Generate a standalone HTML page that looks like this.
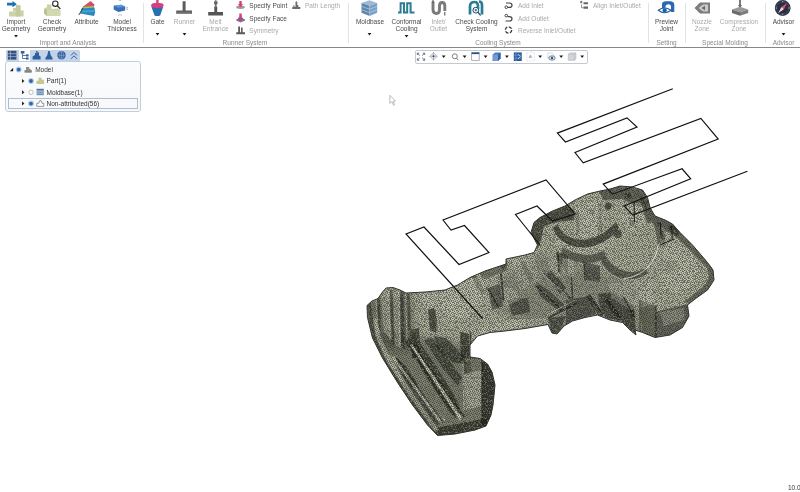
<!DOCTYPE html>
<html><head><meta charset="utf-8">
<style>
html,body{margin:0;padding:0;background:#fff;}
body{width:800px;height:492px;position:relative;overflow:hidden;font-family:"Liberation Sans",sans-serif;font-size:6.5px;color:#555;}
#ribbon{position:absolute;left:0;top:0;width:800px;height:46.800px;background:#fff;border-bottom:1.400px solid #888;}
.lb{position:absolute;transform:translateX(-50%);text-align:center;white-space:nowrap;line-height:7.3px;color:#4a4a4a;}
.lb.g{color:#a9a9a9;}
.gl{position:absolute;transform:translateX(-50%);white-space:nowrap;top:38.5px;line-height:7.3px;color:#8a8a8a;}
.sm{position:absolute;white-space:nowrap;line-height:7.3px;color:#4a4a4a;}
.sm.g{color:#a9a9a9;}
.sep{position:absolute;top:3px;height:40px;width:1px;background:#e3e3e3;}
.ar{position:absolute;width:0;height:0;border-left:1.900px solid transparent;border-right:1.900px solid transparent;border-top:2.500px solid #1a1a1a;transform:translateX(-50%);}
svg{position:absolute;overflow:visible;}

#vtb{position:absolute;left:415px;top:50.300px;width:170.500px;height:11.500px;border:.8px solid #c6c9ce;border-radius:2px;background:#fff;}
#tabs{position:absolute;left:5.600px;top:49.600px;width:74.500px;height:11.200px;background:#c3d3ea;border-radius:1.500px 1.500px 0 0;}
#tabsel{position:absolute;left:13.800px;top:.6px;width:10.800px;height:10.600px;background:#fff;}
#tree{position:absolute;left:5.200px;top:60.800px;width:133.400px;height:49.600px;border:1.200px solid #c3cedd;border-radius:3px;background:linear-gradient(#fbfcfd,#f6f8fa);}
#selrow{position:absolute;left:1.500px;top:36.300px;width:128.600px;height:8.800px;border:.8px solid #b3bccb;background:#f7f9fc;}
.tt{position:absolute;white-space:nowrap;line-height:7.300px;color:#333;font-size:6.500px;}
#ver{position:absolute;left:788px;top:484px;line-height:7.300px;color:#333;white-space:nowrap;}
.lb,.gl,.sm,.tt,#ver{filter:grayscale(1);}
</style></head><body>
<div id="ribbon">
<!-- Import and Analysis -->
<div class="lb" style="left:16px;top:17.6px">Import<br>Geometry</div><div class="lb" style="left:52px;top:17.6px">Check<br>Geometry</div>
<div class="lb" style="left:86.5px;top:17.6px">Attribute</div>
<div class="lb" style="left:122px;top:17.6px">Model<br>Thickness</div>
<div class="gl" style="left:68px">Import and Analysis</div>
<div class="sep" style="left:143px"></div>
<!-- Runner System -->
<div class="lb" style="left:157.5px;top:17.6px">Gate</div><div class="lb g" style="left:184.5px;top:17.6px">Runner</div><div class="lb g" style="left:215.5px;top:17.6px">Melt<br>Entrance</div>
<div class="sm" style="left:249.3px;top:1.7px">Specify Point</div>
<div class="sm" style="left:249.3px;top:14.6px">Specify Face</div>
<div class="sm g" style="left:249.3px;top:27px">Symmetry</div>
<div class="sm g" style="left:305px;top:1.7px">Path Length</div>
<div class="gl" style="left:245px">Runner System</div>
<div class="sep" style="left:348px"></div>
<!-- Cooling System -->
<div class="lb" style="left:370px;top:17.6px">Moldbase</div><div class="lb" style="left:406.5px;top:17.6px">Conformal<br>Cooling</div><div class="lb g" style="left:438.5px;top:17.6px">Inlet/<br>Outlet</div>
<div class="lb" style="left:476.5px;top:17.6px">Check Cooling<br>System</div>
<div class="sm g" style="left:518px;top:1.7px">Add Inlet</div>
<div class="sm g" style="left:518px;top:14.6px">Add Outlet</div>
<div class="sm g" style="left:518px;top:27px">Reverse Inlet/Outlet</div>
<div class="sm g" style="left:593px;top:1.7px">Align Inlet/Outlet</div>
<div class="gl" style="left:498px">Cooling System</div>
<div class="sep" style="left:648px"></div>
<!-- Setting -->
<div class="lb" style="left:666.5px;top:17.6px">Preview<br>Joint</div>
<div class="gl" style="left:666.5px">Setting</div>
<div class="sep" style="left:685px"></div>
<!-- Special Molding -->
<div class="lb g" style="left:702px;top:17.6px">Nozzle<br>Zone</div>
<div class="lb g" style="left:739px;top:17.6px">Compression<br>Zone</div>
<div class="gl" style="left:725px">Special Molding</div>
<div class="sep" style="left:765px"></div>
<!-- Advisor -->
<div class="lb" style="left:783.5px;top:17.6px">Advisor</div><div class="gl" style="left:783.5px">Advisor</div>

<svg id="icons" width="800" height="46" viewBox="0 0 800 46" style="left:0;top:0">
<defs><filter id="ib" x="-10%" y="-10%" width="120%" height="120%"><feGaussianBlur stdDeviation="0.35"/></filter></defs>
<g filter="url(#ib)">
<!-- Import Geometry -->
<path d="M9,16.500V11.500H13V8H15.800V5.300H20.400V10.500H23.600V16.500Z" fill="#cdd2a6"/>
<path d="M15.800,5.300H20.400V16.500H15.800Z" fill="#c3c99a"/>
<path d="M13,11.500h2.800M20.400,10.500h3.200" stroke="#e4e8c8" stroke-width=".7"/>
<path d="M7,2.800H12.500V1L16.800,4.200L12.500,7.200V5.400H7Z" fill="#1c6fb0"/>
<!-- Check Geometry -->
<path d="M44.200,13.500V8.500L47,7V4.600H51.500V9L58,8.500L60.300,10.500V16H47Z" fill="#cdd2a6"/>
<path d="M44.200,8.500L47,10.500V16L44.200,13.500Z" fill="#b9bf90"/>
<path d="M47,10.500H60.300V16H47Z" fill="#d3d8ae"/>
<circle cx="55.300" cy="3.700" r="2.700" fill="#fff" fill-opacity=".7" stroke="#2a2a2a" stroke-width="1.100"/>
<path d="M57.300,5.800L60,8.600" stroke="#2a2a2a" stroke-width="1.300" stroke-linecap="round"/>
<!-- Attribute -->
<path d="M82.500,7L90.500,1L94.500,4.500L93.500,8Z" fill="#d4506a"/>
<path d="M82.500,7L93.500,6L94,8.500L82,9.500Z" fill="#9ccf5a"/>
<path d="M81.500,8.500L94.500,7.500L95.200,12.500L94,16L80,13.500Z" fill="#2f86c2"/>
<path d="M82,10.500L94.800,10L94.500,12L81,12.500Z" fill="#3aa8c8"/>
<path d="M78.800,15L83.300,7.600" stroke="#333" stroke-width=".9"/>
<!-- Model Thickness -->
<path d="M113.700,5.800L121,4.800L125.200,6.500V10.500L118.500,11.900L113.700,9.500Z" fill="#2e72b8"/>
<path d="M113.700,5.800L121,4.800L125.200,6.500L118.500,7.800Z" fill="#5a9ad6"/>
<path d="M115,7.500h9M115,9h9" stroke="#c05a8a" stroke-width=".5" stroke-dasharray=".8 1.200"/>
<path d="M118,15.600L120,14.400L122,15.600" stroke="#999" stroke-width=".6" fill="none"/>
<path d="M118.500,0L120,.8L121.500,0" stroke="#999" stroke-width=".6" fill="none"/>
<text x="126.200" y="10.300" font-family="Liberation Sans, sans-serif" font-size="6" fill="#8a8a8a">t</text>
<!-- Gate -->
<path d="M151.300,6.500L163.300,6.500L160.200,15.500Q157.300,16.600 154.500,15.500Z" fill="#2c6fae"/>
<path d="M150.800,5.200Q152,2.500 156.200,3V0H158.600V3Q163,2.600 163.800,5.200Q163,7.800 157.300,8Q151.500,7.800 150.800,5.200Z" fill="#d8407c"/>
<!-- Runner -->
<path d="M182.600,1.300H185.600V10.600H192V13.700H176.200V10.600H182.600Z" fill="#5c5c5c"/>
<path d="M176.200,12.300H192" stroke="#888" stroke-width=".6"/>
<!-- Melt Entrance -->
<path d="M214.300,6.500H217.200V11.900H223V15.600H208.200V11.900H214.300Z" fill="#555"/>
<path d="M214,1.200H217.500V4.200H216.600V6.500H214.900V4.200H214Z" fill="#666"/>
<path d="M215,0h1.500v1.200h-1.500z" fill="#888"/>
<!-- Specify Point -->
<ellipse cx="240.500" cy="7.300" rx="4.300" ry="1.700" fill="#9a9a9a"/>
<path d="M239.300,1H241.700V4.300H243.200L240.500,7.200L237.800,4.300H239.300Z" fill="#d83a7a"/>
<!-- Specify Face -->
<path d="M236.300,19.500L240.500,17.500L245,19.500L240.500,21.700Z" fill="#2f7fc0"/>
<path d="M236.300,19.500L240.500,21.700L245,19.500V20.600L240.500,22.600L236.300,20.600Z" fill="#c03a3a"/>
<path d="M239.300,13.500H241.700V16.500L243.300,19.300H237.700L239.300,16.500Z" fill="#d83a7a"/>
<!-- Symmetry -->
<path d="M238.200,26.500H240V32.300H241V27.500H242.600V32.300H245V34.300H236.300V32.300H238.200Z" fill="#5a5a5a"/>
<!-- Path Length -->
<path d="M295.500,2H297.300V5H298.300V7H300.300V9H292.300V7H293.300V5.500H294.600V7H295.500Z" fill="#6a6a6a"/>
<path d="M295.800,1.200h1.200v1h-1.200z" fill="#c86a8a"/>
<!-- Moldbase -->
<path d="M361.500,3L369.500,.3L377.200,3L369.500,5.800Z" fill="#9db9d6"/>
<path d="M361.500,3L369.500,5.800V16L361.500,12.800Z" fill="#5f86ad"/>
<path d="M369.500,5.800L377.200,3V12.800L369.500,16Z" fill="#7aa0c6"/>
<path d="M361.500,6.300L369.500,9.200L377.200,6.300M361.500,9.600L369.500,12.600L377.200,9.600" stroke="#b9d0e6" stroke-width=".7" fill="none"/>
<!-- Conformal Cooling -->
<path d="M398,12.500H400.600V3.200H404V12.500H407.200V3.200H410.600V12.500H414.500" stroke="#2a7d92" stroke-width="2" fill="none" stroke-linejoin="miter"/>
<!-- Inlet/Outlet -->
<path d="M433,1.500V9.500Q433,13.500 436.500,13.500Q439.500,13.500 439.500,9.500V6Q439.500,2.500 442.200,2.500Q444.800,2.500 444.800,6V11" stroke="#7a7a7a" stroke-width="2.900" fill="none" stroke-linecap="butt"/>
<path d="M433,0V3M444.800,12V15.500" stroke="#444" stroke-width="1"/>
<!-- Check Cooling -->
<path d="M470,14.500V6.500Q470,2 474.500,2Q478,2 478,6.500V9M482,14.500V5Q482,1.500 479,1.500" stroke="#2a7d92" stroke-width="2.700" fill="none"/>
<circle cx="475.800" cy="10.200" r="2.900" fill="#eaf3f6" stroke="#1f4f6a" stroke-width="1"/>
<circle cx="475.800" cy="10.200" r="1.100" fill="#2a7d92"/>
<path d="M478,12.400L480.300,15" stroke="#1f4f6a" stroke-width="1.200" stroke-linecap="round"/>
<!-- Add Inlet -->
<path d="M506,3H509.500Q512,3 512,5.200Q512,7.400 509.500,7.400H508" stroke="#444" stroke-width="1.200" fill="none"/>
<circle cx="506.300" cy="7.200" r="1.300" fill="#fff" stroke="#444" stroke-width="1"/>
<!-- Add Outlet -->
<path d="M507.500,16.600H509.500Q512,16.600 512,18.800Q512,21 509.500,21H505.500" stroke="#444" stroke-width="1.200" fill="none"/>
<circle cx="506.300" cy="15.600" r="1.300" fill="#fff" stroke="#444" stroke-width="1"/>
<!-- Reverse -->
<circle cx="508.500" cy="30" r="3.200" fill="none" stroke="#3a3a3a" stroke-width="1.300" stroke-dasharray="3.400 1.600"/>
<!-- Align -->
<path d="M580,2h2.500M581.200,.8v2.500" stroke="#444" stroke-width=".8"/>
<path d="M583.500,2.200h4.500v2h-4.500zM583.500,6.500h4.500v2.300h-4.500z" fill="#666"/>
<path d="M581.500,4.500v3.200h2" stroke="#666" stroke-width=".7" fill="none"/>
<!-- Preview Joint -->
<path d="M662,9V4.500Q662,1.300 666,1.300H670Q674.300,1.300 674.300,5V12H671V6.500Q671,4.300 668.500,4.300Q665.500,4.300 665.500,7Z" fill="#2a68b0"/>
<path d="M658.300,10.300Q664.500,5.500 671,10.300Q664.500,15.300 658.300,10.300Z" fill="#fff" stroke="#1f5fa8" stroke-width="1.100"/>
<circle cx="664.700" cy="10.300" r="2.100" fill="#1f5fa8"/>
<!-- Nozzle Zone -->
<path d="M694.500,8L700,2.500H710V13.500H700Z" fill="#7c7c7c"/>
<path d="M698.500,8L703,4.500H708V11.500H703Z" fill="#c9c9c9"/>
<path d="M701.500,8L705,5.800V10.200Z" fill="#666"/>
<!-- Compression Zone -->
<path d="M739,0H741V6.500H739Z" fill="#777"/>
<path d="M738,5H742L740,8Z" fill="#666"/>
<path d="M732,9.500L740,6.800L748.200,9.500L740,12.300Z" fill="#9a9a9a"/>
<path d="M732,9.500L740,12.300V15.800L732,13Z" fill="#6a6a6a"/>
<path d="M740,12.300L748.200,9.500V13L740,15.800Z" fill="#7d7d7d"/>
<!-- Advisor -->
<circle cx="782.700" cy="8" r="7.900" fill="#2b2d40"/>
<circle cx="782.700" cy="8" r="6.300" fill="none" stroke="#5a5f7a" stroke-width=".6"/>
<path d="M787.300,2.800L783.800,9.200L781.500,7Z" fill="#e8506a"/>
<path d="M778.300,13L783.800,9.200L781.500,7Z" fill="#dfe3ee"/>
<path d="M782.700,.8v1.600M782.700,13.600v1.600M775.500,8h1.600M788.300,8h1.600" stroke="#c8ccd8" stroke-width=".7"/>
</g>
</svg>
</div>

<svg id="scene" width="800" height="445" viewBox="0 47 800 445" style="left:0;top:47px">
<defs>
<pattern id="mesh" width="8.0" height="8.0" patternUnits="userSpaceOnUse">
<path d="M0.00 0.00h.01M0.00 8.00h.01M8.00 0.00h.01M8.00 8.00h.01M0.00 4.00h.01M8.00 4.00h.01M0.80 2.40h.01M8.80 2.40h.01M0.80 6.40h.01M8.80 6.40h.01M1.60 0.80h.01M1.60 8.80h.01M1.60 4.80h.01M2.40 3.20h.01M2.40 -0.80h.01M2.40 7.20h.01M3.20 1.60h.01M3.20 5.60h.01M4.00 0.00h.01M4.00 8.00h.01M4.00 4.00h.01M4.80 2.40h.01M4.80 6.40h.01M5.60 0.80h.01M5.60 8.80h.01M5.60 4.80h.01M6.40 3.20h.01M6.40 -0.80h.01M6.40 7.20h.01M-0.80 1.60h.01M7.20 1.60h.01M-0.80 5.60h.01M7.20 5.60h.01" stroke="#14150f" stroke-width="1.25" stroke-linecap="round" fill="none"/>
</pattern>
<filter id="noise" x="0" y="0" width="100%" height="100%"><feTurbulence type="fractalNoise" baseFrequency="0.62" numOctaves="2" seed="7" result="t"/><feColorMatrix in="t" type="matrix" values="0 0 0 0 0.14  0 0 0 0 0.145  0 0 0 0 0.12  -7 0 0 0 3.3"/></filter>
<filter id="b0" x="-30%" y="-30%" width="160%" height="160%"><feGaussianBlur stdDeviation="0.3"/></filter>
<filter id="b1" x="-30%" y="-30%" width="160%" height="160%"><feGaussianBlur stdDeviation="0.55"/></filter>
<filter id="b2" x="-30%" y="-30%" width="160%" height="160%"><feGaussianBlur stdDeviation="2"/></filter>
<filter id="b4" x="-30%" y="-30%" width="160%" height="160%"><feGaussianBlur stdDeviation="3.5"/></filter>
<clipPath id="mclip"><use href="#mpoly"/></clipPath>
</defs>
<!-- cooling lines behind/over -->
<g id="model">
<polygon id="mpoly" fill="#cdd0b9" points="367,305.5 372,301 378,298.5 382.5,292 386,288 393,287.5 400,290 406,293 425,292 445,290 457.5,285 470,277.5 485,271 500,266 506,264 506,259 525,255 534,252.5 537.5,245 531,232.5 534,222.5 540,217.5 552.5,211 565,206 575,200 587.5,194 600,191 610,189 620,186 632.5,187 642.5,190 647.5,197.5 650,207.5 655,216 665,220 672.5,224 680,232.5 692.5,245 707.5,262.5 713,270 714,280 707.5,290 695,299 687.5,305 689,316 682.5,327.5 670,335 655,337.5 642.5,332.5 635,330 636,335 630,330 622.5,322.5 610,320 597.5,315 585,317.5 572.5,321 564,326 557,334 552,333 548,324.5 525,328.5 505,331 490,332.5 477.5,336 470,345 470,357 480,358.5 487.5,364 492,372 495,385 493,405 491,415 486,426 475,430 455,434 437.5,435.5 427.5,425 412.5,405 397.5,382.5 382.5,358 372.5,338 367.5,317.5"/>
<g clip-path="url(#mclip)">
<g id="soft" filter="url(#b4)" fill="#26271f">
<!-- lower handle overall darker -->
<polygon opacity=".36" points="372,330 470,345 500,370 495,430 437,440 395,385"/>
<polygon opacity=".22" points="540,255 640,285 640,340 545,335 500,310 500,280"/>
<polygon opacity=".4" points="366,300 410,292 416,350 380,350"/>
</g>
<g id="shade" filter="url(#b1)" fill="#22231c">
<!-- handle: wall stripes -->
<polygon opacity=".5" points="377,297 380,296 381,330 378,328"/>
<polygon opacity=".5" points="390,290 392.500,290 394,345 391,343"/>
<polygon opacity=".55" points="400,291 403.500,292 405,350 401,346"/>
<polygon opacity=".5" points="407,294 409.500,294 411,330 408,330"/>
<polygon opacity=".62" points="367,306 371,303 375,336 385,357 400,381 429,423 438,433 432,436 412,408 396,384 381,358 371,338"/>
<!-- handle dark blobs -->
<polygon opacity=".7" points="428,310 434,308 437,320 436,333 430,330"/>
<polygon opacity=".65" points="410,330 419,328 421,360 412,358"/>
<polygon opacity=".6" points="434,336 446,338 464,356 466,364 452,362 438,350"/>
<polygon opacity=".7" points="460,332 469,334 469,358 461,360"/>
<polygon opacity=".6" points="397,358 406,366 418,384 412,388 398,368"/>
<polygon opacity=".65" points="412,345 420,343 436,366 456,398 462,414 454,418 440,396 420,366"/>
<polygon opacity=".6" points="424,340 432,338 452,364 462,378 458,386 444,370"/>
<polygon opacity=".55" points="400,372 410,380 440,424 432,428 408,396"/>
<polygon opacity=".75" points="482,361 497,368 497,420 488,430 482,424"/>
<polygon opacity=".7" points="436,428 488,418 492,432 437,440"/>
<polygon opacity=".45" points="463,362 470,360 472,374 464,374"/>

<!-- extra ribs -->
<polygon opacity=".55" points="404,340 409,338 430,370 458,412 452,415 428,380"/>
<polygon opacity=".5" points="470,274 474,272 486,292 482,296"/>
<polygon opacity=".5" points="520,262 524,260 534,280 530,284"/>
<polygon opacity=".55" points="575,212 579,210 580,232 576,236"/>
<polygon opacity=".5" points="598,204 601,203 602,230 599,234"/>
<polygon opacity=".5" points="640,196 644,198 650,222 646,224"/>
<polygon opacity=".5" points="660,232 664,230 666,246 662,248"/>
<polygon opacity=".5" points="604,300 608,298 622,318 618,322"/>
<polygon opacity=".55" points="586,296 590,294 604,314 600,318"/>
<polygon opacity=".5" points="622,296 626,298 636,316 632,320"/>
<polygon opacity=".45" points="500,266 506,259 508,264 503,270"/>
<!-- neck -->
<polygon opacity=".55" points="488,288 500,284 503,306 492,310"/>
<polygon opacity=".55" points="508,300 528,298 530,312 512,316"/>
<polygon opacity=".4" points="480,272 506,263 508,270 482,280"/>
<polygon opacity=".6" points="546,274 552,270 566,288 560,294"/>
<polygon opacity=".55" points="536,282 548,290 566,306 560,312 540,296"/>
<!-- head rim upper-left -->
<polygon opacity=".7" points="531,222 536,217 552,210 566,205 574,210 574,220 556,222 544,226 541,240 538,248 532,236"/>
<!-- bowl inner crescent -->
<path opacity=".7" d="M558,224 C562,240 590,250 616,222 L619,228 C596,258 560,250 553,228Z"/>
<path opacity=".55" d="M564,246 C575,256 592,258 604,250 L606,258 C592,266 572,264 560,254Z"/>
<!-- second ring -->
<path opacity=".6" d="M606,256 C614,272 634,276 646,268 L648,273 C634,284 610,280 601,261Z"/>
<circle opacity=".7" cx="608" cy="206" r="3.500"/>
<circle opacity=".65" cx="628" cy="196" r="3.500"/>
<circle opacity=".6" cx="578" cy="196" r="3"/>
<circle opacity=".65" cx="618" cy="234" r="4"/>
<circle opacity=".55" cx="632" cy="223" r="3"/>
<circle opacity=".5" cx="592" cy="212" r="2.500"/>
<polygon opacity=".55" points="598,191 620,186 643,190 649,202 640,207 622,199 604,200"/>
<!-- blocks below bowl -->
<polygon opacity=".6" points="556,252 568,256 568,274 558,272"/>
<polygon opacity=".55" points="584,262 600,266 600,282 586,280"/>
<!-- bottom ribs of head -->
<polygon opacity=".65" points="598,294 612,292 634,306 636,334 628,328 620,320 606,318 600,308"/>
<polygon opacity=".55" points="566,300 590,296 596,314 574,320 566,326"/>
<polygon opacity=".6" points="548,318 566,316 560,332 552,334"/>
<!-- right lip -->
<polygon opacity=".55" points="655,312 688,304 690,318 682,329 668,336 656,338"/>
<polygon opacity=".5" points="640,300 656,306 656,338 642,333"/>
<!-- right rim -->
<polygon opacity=".5" points="672,223 714,269 715,281 708,291 690,305 685,301 706,284 709,276 707,268 668,228"/>
<polygon opacity=".55" points="648,200 654,214 666,219 680,232 676,237 662,228 650,222 644,205"/>
<circle opacity=".35" cx="670" cy="267" r="5" filter="url(#b2)"/>
<polygon opacity=".5" points="654,224 660,222 664,240 658,244"/>
</g>
<g id="light" filter="url(#b1)" fill="#eef0dc">

<polygon opacity=".85" points="410,345 412.500,344 461.500,417 459,419"/>
<polygon opacity=".75" points="391,357 394,356 443,421 440,423"/>
<polygon opacity=".8" points="435,417 445,419 445,421 435,419"/>
<polygon opacity=".5" points="546,262 556,258 566,272 556,278"/>
<polygon opacity=".45" points="620,206 640,202 648,224 630,232 622,222"/>
<polygon opacity=".45" points="500,290 512,286 520,300 506,306"/>
<polygon opacity=".45" points="420,294 438,292 440,306 426,308"/>
<polygon opacity=".45" points="476,338 490,332 510,328 548,325 548,318 510,320 490,324 478,330 470,340"/>
<polygon opacity=".5" points="440,293 470,279 484,276 486,300 470,316 452,320 442,312"/>
<polygon opacity=".55" points="464,374 481,370 482,406 466,410"/>
<polygon opacity=".5" points="576,208 598,200 604,214 600,234 584,238 574,232"/>
<polygon opacity=".4" points="660,238 690,250 702,275 682,294 660,288 664,262"/>
<polygon opacity=".4" points="608,284 650,280 655,304 630,310 612,298"/>
<polygon opacity=".5" points="381,297 389,292 392,340 384,332"/>
<polygon opacity=".45" points="393,292 399.500,292 401,348 395,346"/>
<polygon opacity=".45" points="562,258 574,260 574,276 562,274"/>
<polygon opacity=".4" points="512,262 534,256 540,280 520,290"/>
<polygon opacity=".5" points="412,348 414,346 462,418 460,421"/>
<polygon opacity=".6" points="373,320 377,318 381,338 393,362 415,396 439,430 435,432 409,396 387,362 377,340"/>
<polygon opacity=".4" points="660,312 684,308 684,320 664,326"/>
<path opacity=".4" d="M556,236 C566,250 596,252 614,236 L616,242 C598,258 562,256 553,240Z"/>
</g>
<g id="edges" fill="none" stroke="#1c1d17" stroke-linecap="round" opacity=".75" filter="url(#b0)">
<path d="M413.500,345L464,416.500" stroke-width="1.600"/>
<path d="M544,274L570,298" stroke-width="2.200"/>
<path d="M536,286L562,310" stroke-width="1.500"/>
<path d="M549,317.500L576,303.500" stroke-width="1.500"/>
<path d="M501,274L503.500,300" stroke-width="2"/>
<path d="M571.500,278L572.500,298" stroke-width="1.500"/>
<path d="M396,358L443,422" stroke-width="1.300"/>
<path d="M470.500,334V358" stroke-width="1.600"/>
<path d="M487,288L498,306" stroke-width="1.500"/>
<path d="M606,298L620,318M590,296L602,314M624,298L634,316" stroke-width="1.500"/>
<path d="M558,252L559,272M584,262L585,280" stroke-width="1.400"/>
<path d="M640,300V332M656,306V337" stroke-width="1.200"/>
<path d="M482,361V424" stroke-width="1.400"/>
</g>
<g fill="none" stroke="#f0f2de" stroke-linecap="round" opacity=".7" filter="url(#b0)">
<path d="M548,314.500L574,300.500" stroke-width="1.400"/>
<path d="M541,272L567,296" stroke-width="1.100"/>
<path d="M463,363L464,410" stroke-width="1.200"/>
<path d="M376,300L378,332M388.500,291L390,340M398.500,291L400,346M405.500,293L407,340" stroke-width="1"/>
</g>
<rect x="360" y="180" width="360" height="260" fill="url(#mesh)" opacity=".85"/>
<rect x="360" y="180" width="360" height="260" filter="url(#noise)"/>
<path d="M657.500,246 C657,262 642,277 624,278.500" fill="none" stroke="#f2f3e6" stroke-width="1" opacity=".75"/>
</g>
<polygon fill="none" stroke="#33342e" stroke-width="1" stroke-linejoin="round" points="367,305.5 372,301 378,298.5 382.5,292 386,288 393,287.5 400,290 406,293 425,292 445,290 457.5,285 470,277.5 485,271 500,266 506,264 506,259 525,255 534,252.5 537.5,245 531,232.5 534,222.5 540,217.5 552.5,211 565,206 575,200 587.5,194 600,191 610,189 620,186 632.5,187 642.5,190 647.5,197.5 650,207.5 655,216 665,220 672.5,224 680,232.5 692.5,245 707.5,262.5 713,270 714,280 707.5,290 695,299 687.5,305 689,316 682.5,327.5 670,335 655,337.5 642.5,332.5 635,330 636,335 630,330 622.5,322.5 610,320 597.5,315 585,317.5 572.5,321 564,326 557,334 552,333 548,324.5 525,328.5 505,331 490,332.5 477.5,336 470,345 470,357 480,358.5 487.5,364 492,372 495,385 493,405 491,415 486,426 475,430 455,434 437.5,435.5 427.5,425 412.5,405 397.5,382.5 382.5,358 372.5,338 367.5,317.5"/>
</g>
<g id="cool" fill="none" stroke="#111" stroke-width="1.15" stroke-linejoin="miter">
<polyline points="672.8,88.8 557.4,133.1 565.4,142 627,117.9 637,127 575,152.5 583.2,162.8 700.9,118.5 718.2,139.1 603.2,184.1 612.4,194.2 682.1,168.8 690.7,178.8 624.1,205.9 632.7,215.1 747.4,171.3"/>
<path d="M634,202L634.500,222M660.300,222.500L661,235M671.500,226L672.300,238M660,245L674,239" stroke-width=".9"/>
<polyline points="482.5,318.5 406,234 424,227 459,264.5 489,252.5 464.5,225.5 451,230 443,220 546,180 575,214 552.5,221 537,206 515.5,214.5 540,245"/>
</g>
</svg>

<!-- view toolbar -->
<div id="vtb"></div>
<svg id="vtbi" width="180" height="16" viewBox="412 48 180 16" style="left:412px;top:48px">
<g filter="url(#ib2)">
<defs><filter id="ib2" x="-5%" y="-20%" width="110%" height="140%"><feGaussianBlur stdDeviation="0.3"/></filter></defs>
<!-- fit -->
<path d="M417.300,55V53.200H419.200M422.800,53.200H424.700V55M424.700,58.400V60.200H422.800M419.200,60.200H417.300V58.400M417.500,53.400L419.800,55.600M424.500,53.400L422.200,55.600M424.500,60L422.200,57.800M417.500,60L419.800,57.800" stroke="#44546e" stroke-width=".8" fill="none"/>
<!-- crosshair -->
<path d="M433.500,52.600L437,56.300L433.500,60L430,56.300Z" fill="#eceef2" stroke="#9aa0ac" stroke-width=".7"/>
<path d="M433.500,52V60.600M429.400,56.300H437.600" stroke="#8a909c" stroke-width=".5"/>
<circle cx="433.500" cy="56.300" r="1" fill="#3a4658"/>
<!-- magnifier -->
<circle cx="454.800" cy="56.300" r="2.500" fill="#fff" stroke="#6e6e6e" stroke-width=".9"/>
<path d="M456.600,58.200L458.300,60.200" stroke="#6e6e6e" stroke-width="1"/>
<!-- window -->
<rect x="471.700" y="52.500" width="7.500" height="7.800" fill="#fff" stroke="#8a8f98" stroke-width=".7"/>
<rect x="471.700" y="52.500" width="7.500" height="1.600" fill="#2f4f86"/>
<!-- cube -->
<path d="M492.700,54.500L495.200,52.400H500.500V58.600L498,61H492.700Z" fill="#4a7cc0"/>
<path d="M492.700,54.500H498V61H492.700Z" fill="#6f9ad4"/>
<path d="M498,54.500L500.500,52.400V58.600L498,61Z" fill="#2f5fa6"/>
<path d="M494,56h3M494,58.500h3" stroke="#d07aa0" stroke-width=".5"/>
<!-- blue square -->
<rect x="513.800" y="52.400" width="8" height="8.600" fill="#2c5c9e"/>
<path d="M516,52.400V61M513.800,55.200H521.800M513.800,58.200H521.800" stroke="#7fa6d8" stroke-width=".6"/>
<path d="M518,54L520.300,56.600L518,59" stroke="#d9e6f6" stroke-width=".8" fill="none"/>
<!-- Ai box -->
<rect x="527" y="52" width="7.300" height="9" fill="#fff" stroke="#c2c6cc" stroke-width=".5" stroke-dasharray=".8 .6"/>
<text x="530.600" y="58.200" font-family="Liberation Sans, sans-serif" font-size="3.600" fill="#6a7f9c" text-anchor="middle">Ai</text>
<!-- eye layers -->
<path d="M547.700,53H552.200L553.400,54.200V58H547.700Z" fill="#fff" stroke="#b9bdc4" stroke-width=".5"/>
<ellipse cx="552" cy="58" rx="3.300" ry="2.200" fill="#dfe6f0" stroke="#4a5c78" stroke-width=".7"/>
<circle cx="552" cy="58" r="1.200" fill="#2f4f86"/>
<!-- grey box -->
<path d="M568.200,54.300L569.800,52.800H576V58.900L574.400,60.400H568.200Z" fill="#d2d4d7" stroke="#b4b7bb" stroke-width=".5"/>
<path d="M568.200,54.300H574.400V60.400M574.400,54.300L576,52.800" stroke="#b0b3b8" stroke-width=".5" fill="none"/>
</g>
</svg>

<!-- tabs -->
<div id="tabs"><div id="tabsel"></div></div>
<svg id="tabi" width="80" height="12" viewBox="5 49 80 12" style="left:5px;top:49px">
<g filter="url(#ib2)">
<!-- list -->
<rect x="7.800" y="50.800" width="8.600" height="8.800" fill="#34507e"/>
<path d="M7.800,53.700H16.400M7.800,56.600H16.400M10.400,50.800V59.600" stroke="#aebfda" stroke-width=".7"/>
<!-- tree -->
<path d="M22.500,53.500V58.500H26.500M22.500,55.500H26.500" stroke="#3a5a8c" stroke-width=".8" fill="none"/>
<rect x="20.800" y="51" width="3.600" height="2.600" fill="#2d63a8"/>
<rect x="26" y="54.300" width="2.600" height="2.200" fill="#2d63a8"/>
<rect x="26" y="57.400" width="2.600" height="2.200" fill="#2d63a8"/>
<!-- shape -->
<path d="M32.600,59.400V56.600L35,55V53.300L37,52L39,53.300V55.600L40.600,56.600V59.400Z" fill="#2f5f9e"/>
<path d="M36,51.200L38.600,52.600" stroke="#2f5f9e" stroke-width=".9"/>
<!-- cone -->
<path d="M48.200,51H49.800L50.600,55L52.600,58V59.600H45.400V58L47.400,55Z" fill="#2f5f9e"/>
<!-- globe -->
<circle cx="61.500" cy="55.300" r="4.200" fill="#2f5f9e"/>
<path d="M61.500,51.100V59.500M57.300,55.300H65.700" stroke="#9fb6d8" stroke-width=".5"/>
<ellipse cx="61.500" cy="55.300" rx="2" ry="4.200" fill="none" stroke="#9fb6d8" stroke-width=".5"/>
<!-- chevrons -->
<path d="M71,55.400L74,52.400L77,55.400M71,58.800L74,55.800L77,58.800" stroke="#3a5a8c" stroke-width="1" fill="none"/>
</g>
</svg>

<!-- tree panel -->
<div id="tree">
<div id="selrow"></div>
</div>
<svg id="treei" width="140" height="52" viewBox="5 61 140 52" style="left:5px;top:61px">
<g filter="url(#ib2)">
<path d="M13.200,67.800V71.200H9.800Z" fill="#222"/>
<circle cx="18.700" cy="69.600" r="3" fill="#bcd0ea"/><circle cx="18.700" cy="69.600" r="1.900" fill="#2f66b0"/>
<path d="M24.500,72.500V70H26V67H29.200V68.800H30.600V70H31.800V72.500Z" fill="#8e8e8e"/>
<path d="M24.800,72h6.800" stroke="#666" stroke-width=".6"/>
<path d="M22,79L24.400,81L22,83Z" fill="#222"/>
<circle cx="31" cy="81" r="3" fill="#bcd0ea"/><circle cx="31" cy="81" r="1.900" fill="#2f66b0"/>
<path d="M36.500,84V80.800H38.500V77.800H41.600V79.800H44V84Z" fill="#c3c98e"/>
<path d="M22,90.300L24.400,92.300L22,94.300Z" fill="#222"/>
<circle cx="31" cy="92.300" r="2.200" fill="#fff" stroke="#9a9a9a" stroke-width=".6"/>
<path d="M36.600,89.300H43.800V95.200H36.600Z" fill="#6f8fb4"/>
<path d="M36.600,91.200H43.800M36.600,93.200H43.800" stroke="#cfdcec" stroke-width=".6"/>
<path d="M36.600,89.300H43.800" stroke="#3f5f8a" stroke-width=".9"/>
<path d="M22,101.600L24.400,103.600L22,105.600Z" fill="#222"/>
<circle cx="31" cy="103.600" r="3" fill="#bcd0ea"/><circle cx="31" cy="103.600" r="1.900" fill="#2f66b0"/>
<path d="M36.800,106.400V103.300H38.800L39.600,100.800H41.200L42,103.300H43.800V106.400Z" fill="#fff" stroke="#555" stroke-width=".6"/>
</g>
</svg>
<div class="tt" style="left:35.200px;top:66px">Model</div>
<div class="tt" style="left:46.500px;top:77.400px">Part(1)</div>
<div class="tt" style="left:46.500px;top:88.700px">Moldbase(1)</div>
<div class="tt" style="left:46.500px;top:100px">Non-attributed(56)</div>

<!-- cursor -->
<svg width="10" height="14" viewBox="388 94 10 14" style="left:388px;top:94px"><path d="M389.800,95.300V103.400L391.800,101.800L393.600,105.300L394.700,104.700L393,101.400L395.400,101Z" fill="#fff" stroke="#a8a8a8" stroke-width=".8" stroke-linejoin="round"/></svg>
<div id="ver">10.0</div>
<svg id="arrows" width="800" height="70" viewBox="0 0 800 70" style="left:0;top:0" fill="#1a1a1a"><path d="M14.1,35.0H17.9L16.0,37.4Z"/><path d="M155.6,33.0H159.4L157.5,35.4Z"/><path d="M182.6,33.0H186.4L184.5,35.4Z"/><path d="M367.6,33.0H371.4L369.5,35.4Z"/><path d="M404.6,35.0H408.4L406.5,37.4Z"/><path d="M781.6,33.0H785.4L783.5,35.4Z"/><path d="M441.8,55.6H445.6L443.7,58.0Z"/><path d="M462.7,55.6H466.5L464.6,58.0Z"/><path d="M483.7,55.6H487.5L485.6,58.0Z"/><path d="M505.0,55.6H508.8L506.9,58.0Z"/><path d="M538.3,55.6H542.1L540.2,58.0Z"/><path d="M559.3,55.6H563.1L561.2,58.0Z"/><path d="M580.3,55.6H584.1L582.2,58.0Z"/></svg>
</body></html>
